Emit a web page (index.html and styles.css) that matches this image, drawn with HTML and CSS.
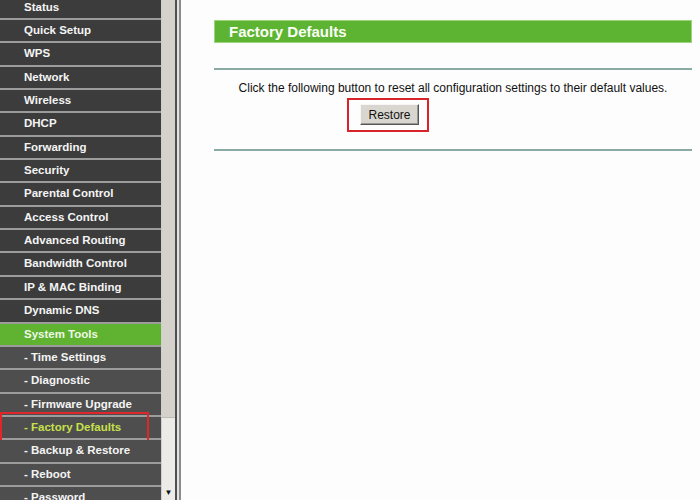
FILE: index.html
```html
<!DOCTYPE html>
<html>
<head>
<meta charset="utf-8">
<link rel="stylesheet" href="styles.css">
</head>
<body>
<div class="page">
  <nav class="sidebar">
    <ul class="menu">
      <li class="item">Status</li>
      <li class="item">Quick Setup</li>
      <li class="item">WPS</li>
      <li class="item">Network</li>
      <li class="item">Wireless</li>
      <li class="item">DHCP</li>
      <li class="item">Forwarding</li>
      <li class="item">Security</li>
      <li class="item">Parental Control</li>
      <li class="item">Access Control</li>
      <li class="item">Advanced Routing</li>
      <li class="item">Bandwidth Control</li>
      <li class="item">IP &amp; MAC Binding</li>
      <li class="item">Dynamic DNS</li>
      <li class="item active">System Tools</li>
      <li class="item sub">- Time Settings</li>
      <li class="item sub">- Diagnostic</li>
      <li class="item sub">- Firmware Upgrade</li>
      <li class="item sub current">- Factory Defaults<span class="mark"></span></li>
      <li class="item sub">- Backup &amp; Restore</li>
      <li class="item sub">- Reboot</li>
      <li class="item sub">- Password</li>
    </ul>
  </nav>
  <div class="scrollbar">
    <div class="thumb"></div>
    <div class="track"></div>
    <div class="arrow">&#9660;</div>
  </div>
  <div class="frame-edge"></div>
  <main class="content">
    <div class="title">Factory Defaults</div>
    <div class="rule rule-top"></div>
    <p class="desc">Click the following button to reset all configuration settings to their default values.</p>
    <div class="action">
      <span class="highlight"><button class="btn">Restore</button></span>
    </div>
    <div class="rule rule-bottom"></div>
  </main>
</div>
</body>
</html>
```

FILE: styles.css
```css
html, body {
  margin: 0;
  padding: 0;
}
body {
  width: 700px;
  height: 500px;
  overflow: hidden;
  font-family: "Liberation Sans", Arial, sans-serif;
}
.page {
  display: flex;
  height: 500px;
}
.sidebar {
  width: 161px;
  flex: none;
  background: #3d3d3d;
  overflow: hidden;
}
.menu {
  list-style: none;
  margin: -3.3px 0 0 0;
  padding: 0;
}
.item {
  position: relative;
  height: 21.35px;
  line-height: 21.35px;
  border-bottom: 2px solid #9c9c9c;
  padding-left: 24px;
  color: #f4f4f4;
  font-weight: bold;
  font-size: 11.5px;
  background: #3c3c3c;
  white-space: nowrap;
}
.item.active {
  background: #5fb331;
  color: #eef8e4;
}
.item.sub {
  background: #4e4e4e;
}
.item.current {
  color: #c6e04c;
}
.mark {
  position: absolute;
  left: 0;
  top: -5px;
  width: 145px;
  height: 26px;
  border: 2px solid #e0262b;
}
.scrollbar {
  width: 13px;
  flex: none;
  display: flex;
  flex-direction: column;
  border-left: 1px solid #cfcfcf;
  background: #ecebe8;
}
.thumb {
  height: 417px;
  background: #d5d2cc;
  border-bottom: 1px solid #bdbab4;
}
.track {
  flex: 1;
  background: #ecebe8;
}
.arrow {
  height: 14px;
  font-size: 8px;
  line-height: 14px;
  text-align: center;
  color: #111;
}
.frame-edge {
  width: 2px;
  flex: none;
  background: #e2e2e2;
  border-left: 2px solid #4f4f4f;
  border-right: 2px solid #8c8c8c;
}
.content {
  flex: 1;
  background: #fdfdfd;
  padding: 20px 8px 0 33px;
}
.title {
  width: 476px;
  height: 21px;
  line-height: 21px;
  background: #5db432;
  border: 1px solid #9dd57c;
  color: #fafff5;
  font-size: 15px;
  font-weight: bold;
  padding-left: 0;
  text-indent: 14px;
}
.rule {
  width: 478px;
  height: 2px;
  background: #89aba3;
}
.rule-top {
  margin-top: 25px;
}
.desc {
  margin: 11px 0 0 0;
  width: 478px;
  text-align: center;
  font-size: 12px;
  line-height: 15px;
  color: #111;
}
.action {
  padding: 2px 0 0 133px;
  height: 36px;
}
.highlight {
  display: inline-block;
  width: 67px;
  height: 26px;
  padding: 4px 0 0 11px;
  border: 2px solid #d9232a;
}
.btn {
  display: block;
  width: 59px;
  height: 21px;
  padding: 0;
  margin: 0;
  font-family: "Liberation Sans", Arial, sans-serif;
  font-size: 12px;
  color: #111;
  background: #d9d6d0;
  border: 1px solid;
  border-color: #f6f6f6 #555 #555 #f6f6f6;
  box-shadow: inset -1px -1px 0 #9a9892;
}
.rule-bottom {
  margin-top: 15px;
}
```
